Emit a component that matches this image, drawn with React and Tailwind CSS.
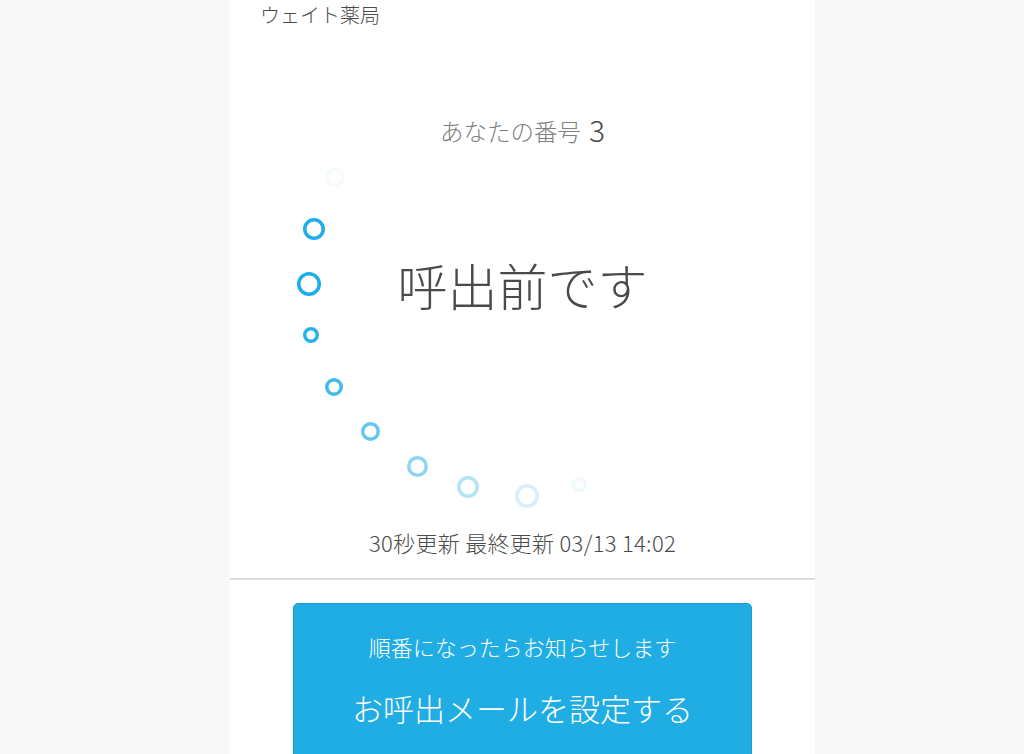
const dots = [
  { x: 105, y: 17, d: 20, o: 0.04 },
  { x: 84, y: 69, d: 22, o: 1 },
  { x: 79, y: 124, d: 24, o: 1 },
  { x: 81, y: 175, d: 16, o: 0.95 },
  { x: 104, y: 227, d: 18, o: 0.85 },
  { x: 140, y: 271, d: 19, o: 0.68 },
  { x: 187, y: 306, d: 21, o: 0.5 },
  { x: 238, y: 327, d: 22, o: 0.33 },
  { x: 297, y: 336, d: 24, o: 0.18 },
  { x: 349, y: 324, d: 15, o: 0.07 },
];

const font = { fontFamily: '"Noto Sans CJK JP", "Noto Sans", sans-serif' };

export default function App() {
  return (
    <div className="h-[754px] overflow-hidden bg-[#f8f8f8] flex pl-[230px]" style={font}>
      <div className="w-[585px] h-full bg-white flex flex-col font-light text-[#4a4a4a]">
        <div className="shrink-0 pl-[30px] h-[110px] text-[20px] leading-[30px]">ウェイト薬局</div>
        <div className="shrink-0 flex items-center justify-center gap-[8px] h-[44px] mb-[6px] text-[23.5px] text-[#808080]">
          <span>あなたの番号</span>
          <span className="text-[30px] leading-[38px] mb-[6px] text-[#4a4a4a]">3</span>
        </div>
        <div className="shrink-0 relative h-[368px] flex justify-center pt-[98px]">
          {dots.map((c, i) => (
            <svg
              key={i}
              className="absolute"
              width={c.d}
              height={c.d}
              viewBox={`0 0 ${c.d} ${c.d}`}
              style={{ left: c.x - c.d / 2, top: c.y - c.d / 2, opacity: c.o }}
            >
              <circle cx={c.d / 2} cy={c.d / 2} r={c.d / 2 - 1.75} fill="none" stroke="#1eaee8" strokeWidth="3.5" />
            </svg>
          ))}
          <h1 className="text-[50px] leading-[52px] font-light">呼出前です</h1>
        </div>
        <div className="shrink-0 h-[52px] border-b-2 border-[#dcdcdc] text-center text-[22px] leading-[28px] tracking-[0.3px]">
          30秒更新 最終更新 03/13 14:02
        </div>
        <div className="shrink-0 px-[63px] pt-[23px]">
          <button className="w-[459px] h-[200px] rounded-[5px] bg-[#1fade3] border border-[#1a9bcc] text-white flex flex-col items-center font-light">
            <span className="mt-[26px] text-[22px] leading-[33px]">順番になったらお知らせします</span>
            <span className="mt-[22px] text-[31px] leading-[46px]">お呼出メールを設定する</span>
          </button>
        </div>
      </div>
    </div>
  );
}
